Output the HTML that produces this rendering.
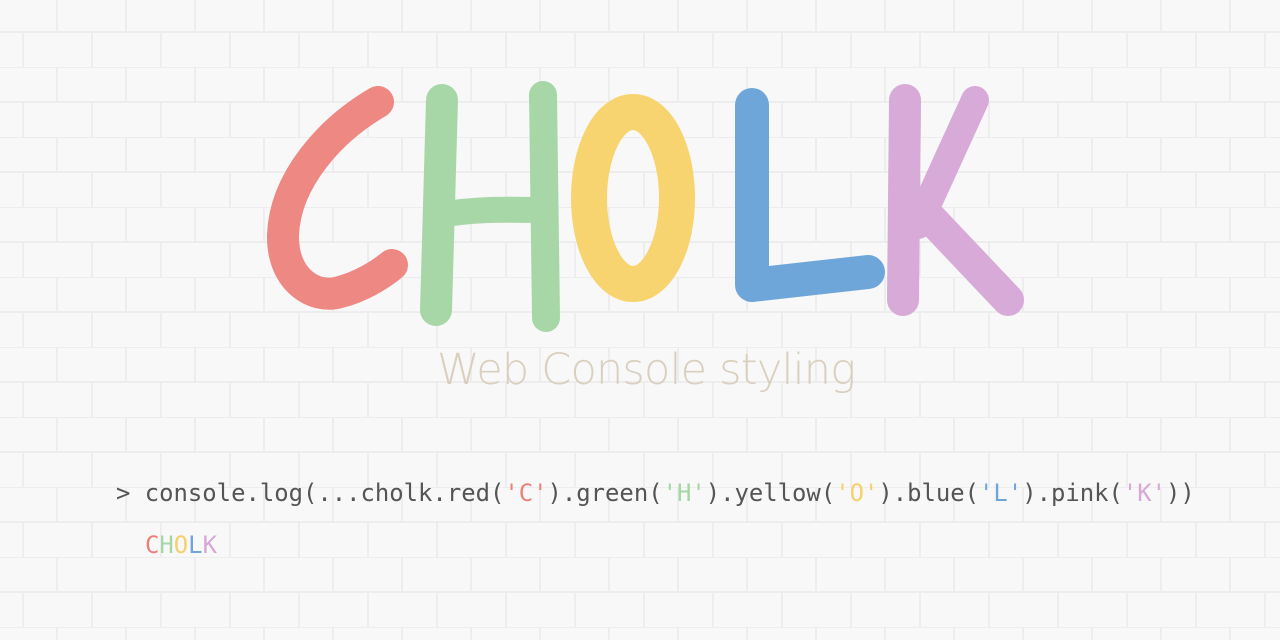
<!DOCTYPE html>
<html><head><meta charset="utf-8"><style>
html,body{margin:0;padding:0}
body{width:1280px;height:640px;overflow:hidden;position:relative;background:#f8f8f8}
.bg{position:absolute;inset:0}
.sub{position:absolute;left:437px;top:345px;font-family:"DejaVu Sans","Liberation Sans",sans-serif;font-weight:200;font-size:43px;color:#d9cfbf;letter-spacing:-0.8px;white-space:nowrap}
.code{position:absolute;left:116px;top:479px;font-family:"DejaVu Sans Mono","Liberation Mono",monospace;font-size:23.9px;color:#555;white-space:pre}
.out{position:absolute;left:145px;top:531px;font-family:"DejaVu Sans Mono","Liberation Mono",monospace;font-size:23.9px;white-space:pre}
.r{color:#ef7f78}.g{color:#a5d6a5}.y{color:#f7d06a}.b{color:#6fa6da}.p{color:#d6a8d6}
</style></head><body>
<svg class="bg" width="1280" height="640">
<defs><pattern id="br" width="69" height="70" patternUnits="userSpaceOnUse" x="0" y="-3">
<rect width="69" height="70" fill="#f8f8f8"/>
<path d="M0 0H69M0 35H69M57 0V35M23 35V70" stroke="#ededed" stroke-width="2" fill="none"/>
</pattern></defs>
<rect width="1280" height="640" fill="url(#br)"/>
<g fill="none" stroke-linecap="round" stroke-linejoin="round">
<path d="M378 102 C330 130 285 180 283 235 C282 280 315 300 340 292 C360 287 380 275 392 265" stroke="#ee8882" stroke-width="32"/>
<path d="M442 100 L436 310" stroke="#a7d7a7" stroke-width="32"/>
<path d="M543 95 L546 318" stroke="#a7d7a7" stroke-width="28"/>
<path d="M440 215 C480 208 510 210 545 210" stroke="#a7d7a7" stroke-width="26"/>
<ellipse cx="633" cy="198" rx="44" ry="86" stroke="#f8d471" stroke-width="36"/>
<path d="M752 105 L752 285 L868 272" stroke="#6fa6d9" stroke-width="34"/>
<path d="M905 100 L903 300" stroke="#d8aad8" stroke-width="32"/>
<path d="M975 100 L918 225" stroke="#d8aad8" stroke-width="28"/>
<path d="M918 205 L1008 300" stroke="#d8aad8" stroke-width="32"/>
</g>
</svg>
<div class="sub">Web Console styling</div>
<div class="code">&gt; console.log(...cholk.red(<span class="r">'C'</span>).green(<span class="g">'H'</span>).yellow(<span class="y">'O'</span>).blue(<span class="b">'L'</span>).pink(<span class="p">'K'</span>))</div>
<div class="out"><span class="r">C</span><span class="g">H</span><span class="y">O</span><span class="b">L</span><span class="p">K</span></div>
</body></html>
